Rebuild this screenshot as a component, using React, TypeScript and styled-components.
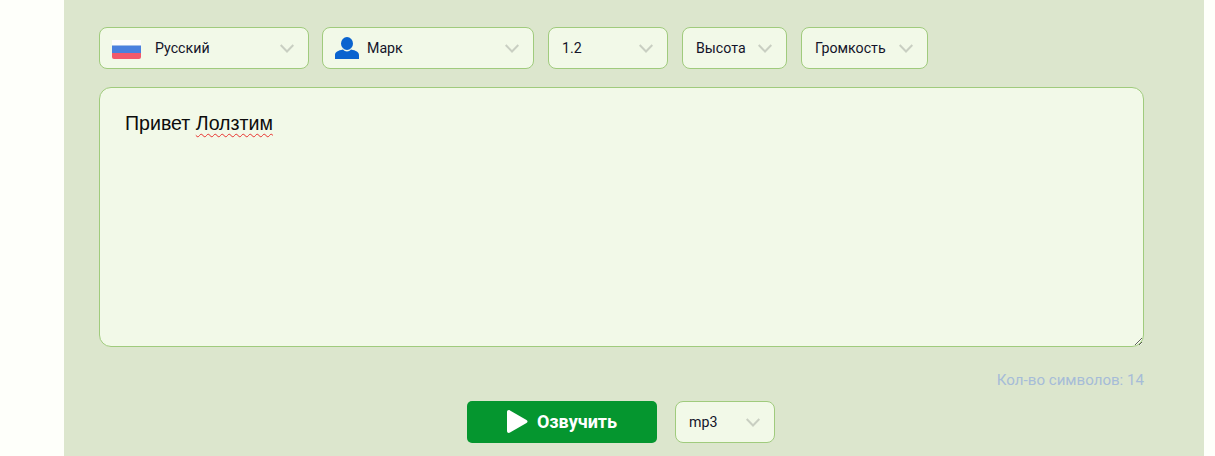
import { ReactElement } from "react";
import styled, { createGlobalStyle } from "styled-components";

const GlobalStyle = createGlobalStyle`
  html, body {
    margin: 0;
    padding: 0;
    background: #fefffa;
    font-family: Roboto, "Liberation Sans", sans-serif;
  }
`;

const Page = styled.div`
  width: 1215px;
  height: 456px;
  overflow: hidden;
  padding: 0 11px 0 64px;
  box-sizing: border-box;
`;

const Panel = styled.main`
  height: 100%;
  background: #dce6cd;
  box-sizing: border-box;
  padding: 27px 60px 0 35px;
  display: flex;
  flex-direction: column;
`;

const Toolbar = styled.div`
  display: flex;
  height: 42px;
  gap: 14px;
`;

const SelectBox = styled.div<{ $width: number; $pad?: number }>`
  position: relative;
  width: ${(p) => p.$width}px;
  height: 42px;
  box-sizing: border-box;
  flex: none;
  display: flex;
  align-items: center;
  padding-left: ${(p) => p.$pad ?? 13}px;
  background: #f2f9e8;
  border: 1px solid #a0cb7d;
  border-radius: 8px;
  font-size: 14.2px;
  color: #14142a;
`;

const LanguageSelect = styled(SelectBox)`
  margin-right: -1px;
`;

const Chevron = styled.svg`
  position: absolute;
  right: 14px;
  top: 16px;
  width: 14px;
  height: 9px;
  fill: none;
  stroke: #c9cfc2;
  stroke-width: 2;
`;

const FlagIcon = styled.svg`
  width: 29px;
  height: 19px;
  margin: 3px 14px 0 0;
  flex: none;
`;

const PersonIcon = styled.svg`
  width: 24px;
  height: 22px;
  margin-right: 8px;
  flex: none;
  fill: #0a63cf;
`;

const TextBox = styled.div`
  margin-top: 18px;
  height: 260px;
  box-sizing: border-box;
  padding: 24px 25px;
  background: #f2f9e8;
  border: 1px solid #a0cb7d;
  border-radius: 12px;
  font-size: 19.6px;
  line-height: 22px;
  color: #0c0c0c;
  font-family: "Liberation Sans", sans-serif;
  resize: vertical;
  overflow: auto;
`;

const Misspelled = styled.span`
  text-decoration: underline wavy #e8322e 1.3px;
  text-underline-offset: 3px;
`;

const Counter = styled.div`
  margin-top: 25px;
  height: 16px;
  line-height: 16px;
  text-align: right;
  font-size: 15.1px;
  color: #a6bcd8;
`;

const Actions = styled.div`
  margin-top: 13px;
  padding-left: 368px;
  display: flex;
  gap: 18px;
`;

const SpeakButton = styled.button`
  width: 190px;
  height: 42px;
  border: 0;
  border-radius: 5px;
  background: #05962f;
  color: #fff;
  display: flex;
  align-items: center;
  justify-content: center;
  gap: 9px;
  font-family: Roboto, sans-serif;
  font-size: 18px;
  font-weight: 700;
  padding: 0 0 1px;
`;

const PlayIcon = styled.svg`
  width: 21px;
  height: 23px;
  fill: #fff;
`;

const ChevronMark = (): ReactElement => (
  <Chevron viewBox="0 0 14 9">
    <path d="M.7 1 7 7.500 13.300 1" />
  </Chevron>
);

export default function App(): ReactElement {
  return (
    <Page>
      <GlobalStyle />
      <Panel>
        <Toolbar>
          <LanguageSelect $width={210} $pad={12}>
            <FlagIcon viewBox="0 0 29 19">
              <path d="M0 0h29v5.500H0z" fill="#fdfdfd" />
              <path d="M0 5.500h29V13H0z" fill="#4a80de" />
              <path d="M0 13h29v4a2 2 0 0 1-2 2H2a2 2 0 0 1-2-2z" fill="#f2596b" />
            </FlagIcon>
            Русский
            <ChevronMark />
          </LanguageSelect>
          <SelectBox $width={212} $pad={12}>
            <PersonIcon viewBox="0 0 24 22">
              <ellipse cx="12" cy="6.500" rx="6" ry="6.500" />
              <path d="M0 22v-4c0-3 3-4.500 8-5.500 1 1.200 2.500 2 4 2s3-.8 4-2c5 1 8 2.500 8 5.500v4z" />
            </PersonIcon>
            Марк
            <ChevronMark />
          </SelectBox>
          <SelectBox $width={120}>
            1.2
            <ChevronMark />
          </SelectBox>
          <SelectBox $width={105}>
            Высота
            <ChevronMark />
          </SelectBox>
          <SelectBox $width={127}>
            Громкость
            <ChevronMark />
          </SelectBox>
        </Toolbar>
        <TextBox>
          Привет <Misspelled>Лолзтим</Misspelled>
        </TextBox>
        <Counter>Кол-во символов: 14</Counter>
        <Actions>
          <SpeakButton>
            <PlayIcon viewBox="0 0 21 23">
              <path d="M0 2C0 .4 1.500-.4 3 .4l16.500 9.500c1.400.8 1.400 2.400 0 3.200L3 22.600c-1.500.8-3 0-3-1.600z" />
            </PlayIcon>
            Озвучить
          </SpeakButton>
          <SelectBox $width={100}>
            mp3
            <ChevronMark />
          </SelectBox>
        </Actions>
      </Panel>
    </Page>
  );
}
